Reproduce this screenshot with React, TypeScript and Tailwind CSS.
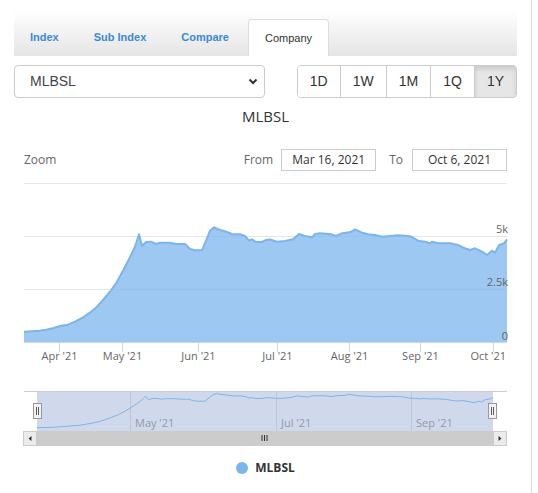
import React from 'react';

const tabs = ['Index', 'Sub Index', 'Compare', 'Company'];
const ranges = ['1D', '1W', '1M', '1Q', '1Y'];

// price curve traced in page pixels (x, y); y 342 = 0, 236 = 5k
const pts: [number, number][] = [
  [24, 331.7], [32, 331.2], [40, 330.7], [47, 329.5], [53, 328.3], [60, 326], [68, 324.7], [75, 321.7],
  [83, 317.3], [90, 312.7], [97, 306.7], [103, 300], [110, 291.7], [117, 281.7], [123, 270.7], [130, 257.3],
  [135, 246.7], [139, 234.3], [142, 246], [146, 242], [151, 241.7], [156, 244], [160, 242.7], [170, 242.7],
  [176, 244], [185, 244], [190, 249], [195, 250.3], [202, 250.3], [207, 238.3], [210, 230.7], [214, 227.3],
  [220, 230], [225, 231.3], [232, 234], [240, 234.3], [245, 236], [249, 240.7], [252, 239.3], [256, 242],
  [262, 242], [266, 240], [270, 239.5], [277, 241.7], [285, 241], [293, 239.3], [299, 234], [305, 236],
  [312, 237.3], [315, 234], [320, 233.3], [330, 234], [336, 236], [342, 233.3], [350, 232.3], [355, 229.3],
  [362, 232.7], [368, 234.3], [375, 235], [382, 236.7], [390, 236], [398, 235.3], [408, 236], [412, 237],
  [418, 240.7], [425, 241.7], [430, 243.3], [432, 241.7], [438, 243.3], [450, 243.3], [458, 245], [465, 248.3],
  [470, 250], [475, 248.3], [482, 251.7], [487, 255], [492, 250.7], [495, 252.7], [499, 245.3], [504, 243.3],
  [507, 239.3],
];

const linePath = pts.map(([x, y], i) => `${i ? 'L' : 'M'}${x} ${y}`).join(' ');
const areaPath = `${linePath} L507 342 L24 342 Z`;
const navPath = pts
  .map(([x, y], i) => `${i ? 'L' : 'M'}${(37 + (x - 24) * 0.944).toFixed(1)} ${(396 + (y - 234.3) * 0.325).toFixed(1)}`)
  .join(' ');

const xTicks = [
  { x: 59.5, label: "Apr '21" },
  { x: 122.5, label: "May '21" },
  { x: 198.5, label: "Jun '21" },
  { x: 277.5, label: "Jul '21" },
  { x: 349.5, label: "Aug '21" },
  { x: 420.5, label: "Sep '21" },
  { x: 493.5, label: "Oct '21" },
];

const navTicks = [
  { x: 130.5, label: "May '21" },
  { x: 276.5, label: "Jul '21" },
  { x: 411.5, label: "Sep '21" },
];

const chartFont = { fontFamily: '"Open Sans", "Liberation Sans", sans-serif' };

const Chart: React.FC = () => (
  <svg width={503} height={274} viewBox="14 176 503 274" className="block" style={chartFont}>
    {/* grid */}
    {[183.5, 236.5, 289.5].map((y) => (
      <line key={y} x1={24} x2={507} y1={y} y2={y} stroke="#e6e6e6" />
    ))}
    <path d={areaPath} fill="#7cb5ec" fillOpacity={0.75} />
    <path d={linePath} fill="none" stroke="#7cb5ec" strokeWidth={2} strokeLinejoin="round" />
    <line x1={24} x2={507} y1={342.5} y2={342.5} stroke="#ccd6eb" />
    {xTicks.map((t, i) => (
      <g key={t.label}>
        <line x1={t.x} x2={t.x} y1={342} y2={352} stroke="#ccd6eb" />
        <text
          x={i === xTicks.length - 1 ? 506 : t.x}
          y={360}
          fontSize={11}
          fill="#666"
          textAnchor={i === xTicks.length - 1 ? 'end' : 'middle'}
        >
          {t.label}
        </text>
      </g>
    ))}
    {[
      { y: 233, label: '5k' },
      { y: 286, label: '2.5k' },
      { y: 339.5, label: '0' },
    ].map((l) => (
      <text key={l.label} x={508} y={l.y} fontSize={11} fill="#666" textAnchor="end">
        {l.label}
      </text>
    ))}

    {/* navigator */}
    <rect x={37} y={392} width={456} height={39} fill="#d0d9ec" />
    {navTicks.map((t) => (
      <g key={t.label}>
        <line x1={t.x} x2={t.x} y1={392} y2={431} stroke="#bcc7dc" />
        <text x={t.x + 4.5} y={427} fontSize={11} fill="#939aa8">
          {t.label}
        </text>
      </g>
    ))}
    <path d={navPath} fill="none" stroke="#7cb5ec" strokeWidth={1} />
    <line x1={24} x2={507} y1={391.5} y2={391.5} stroke="#cccccc" />
    {[33.5, 488.5].map((x) => (
      <g key={x}>
        <rect x={x} y={403.5} width={8} height={15} fill="#f2f2f2" stroke="#999" />
        <line x1={x + 3} x2={x + 3} y1={407} y2={415} stroke="#333" strokeWidth={0.8} />
        <line x1={x + 5} x2={x + 5} y1={407} y2={415} stroke="#333" strokeWidth={0.8} />
      </g>
    ))}

    {/* scrollbar */}
    <rect x={23} y={431} width={484} height={15} fill="#f2f2f2" />
    <rect x={37} y={431} width={456} height={15} fill="#cccccc" />
    {[262, 264.5, 267].map((x) => (
      <line key={x} x1={x} x2={x} y1={435} y2={441} stroke="#333" />
    ))}
    <rect x={23.5} y={431.5} width={13} height={14} fill="#ebebeb" stroke="#cccccc" />
    <path d="M28.5 438.5 L31.5 436 L31.5 441 Z" fill="#333" />
    <rect x={493.5} y={431.5} width={13} height={14} fill="#ebebeb" stroke="#cccccc" />
    <path d="M501.5 438.5 L498.5 436 L498.5 441 Z" fill="#333" />
  </svg>
);

export default function App() {
  return (
    <div className="w-[532px] min-h-[493px] border-r border-[#dedede] bg-white pt-[10px] font-['Liberation_Sans',Arial,sans-serif]">
      {/* Tabs */}
      <div className="ml-[14px] w-[503px] h-[46px] bg-gradient-to-b from-white to-[#e5e5e5] flex items-end gap-[3px]">
        {tabs.map((t) =>
          t === 'Company' ? (
            <div
              key={t}
              className="h-[37px] px-4 flex items-center bg-white border border-b-0 border-[#dddddd] rounded-t-[4px] text-[11px] text-[#333]"
            >
              {t}
            </div>
          ) : (
            <div key={t} className="h-[37px] px-4 flex items-center text-[11px] font-bold text-[#3c8ad4]">
              {t}
            </div>
          )
        )}
      </div>

      {/* Company select + range buttons */}
      <div className="ml-[14px] w-[503px] mt-[9px] flex justify-between">
        <div className="w-[251px] h-[33px] border border-[#cccccc] rounded-[4px] flex items-center justify-between pl-[15px] pr-[6px] text-[14px] text-[#444]">
          <span>MLBSL</span>
          <svg width="10" height="7" viewBox="0 0 10 7">
            <path d="M1.5 1.5 L5 5 L8.5 1.5" fill="none" stroke="#333" strokeWidth="2" />
          </svg>
        </div>
        <div className="h-[33px] flex border border-[#cccccc] rounded-[4px] overflow-hidden text-[14px] text-[#333]">
          {ranges.map((r, i) => (
            <div
              key={r}
              className={`h-full px-3 flex items-center ${i > 0 ? 'border-l border-[#cccccc]' : ''} ${
                r === '1Y' ? 'bg-[#e6e6e6] shadow-[inset_0_3px_5px_rgba(0,0,0,0.125)]' : 'bg-white'
              }`}
            >
              {r}
            </div>
          ))}
        </div>
      </div>

      {/* Chart title */}
      <div className="ml-[14px] w-[503px] mt-[8px] h-[20px] leading-[20px] text-center text-[15px] text-[#333]" style={chartFont}>
        MLBSL
      </div>

      {/* Range selector */}
      <div className="ml-[14px] w-[503px] mt-[23px] h-[22px] flex items-center pl-[10px] pr-[10px] text-[12px] text-[#666]" style={chartFont}>
        <span>Zoom</span>
        <span className="ml-auto">From</span>
        <div className="ml-[8px] w-[95px] h-[22px] border border-[#cccccc] flex items-center justify-center text-[#333]">
          Mar 16, 2021
        </div>
        <span className="ml-[13px]">To</span>
        <div className="ml-[9px] w-[95px] h-[22px] border border-[#cccccc] flex items-center justify-center text-[#333]">
          Oct 6, 2021
        </div>
      </div>

      <div className="ml-[14px] mt-[5px]">
        <Chart />
      </div>

      {/* Legend */}
      <div className="ml-[14px] w-[503px] mt-[10px] h-[16px] flex items-center justify-center gap-[7px]" style={chartFont}>
        <span className="w-[12px] h-[12px] rounded-full bg-[#7cb5ec]" />
        <span className="text-[12px] font-bold text-[#333]">MLBSL</span>
      </div>
    </div>
  );
}
